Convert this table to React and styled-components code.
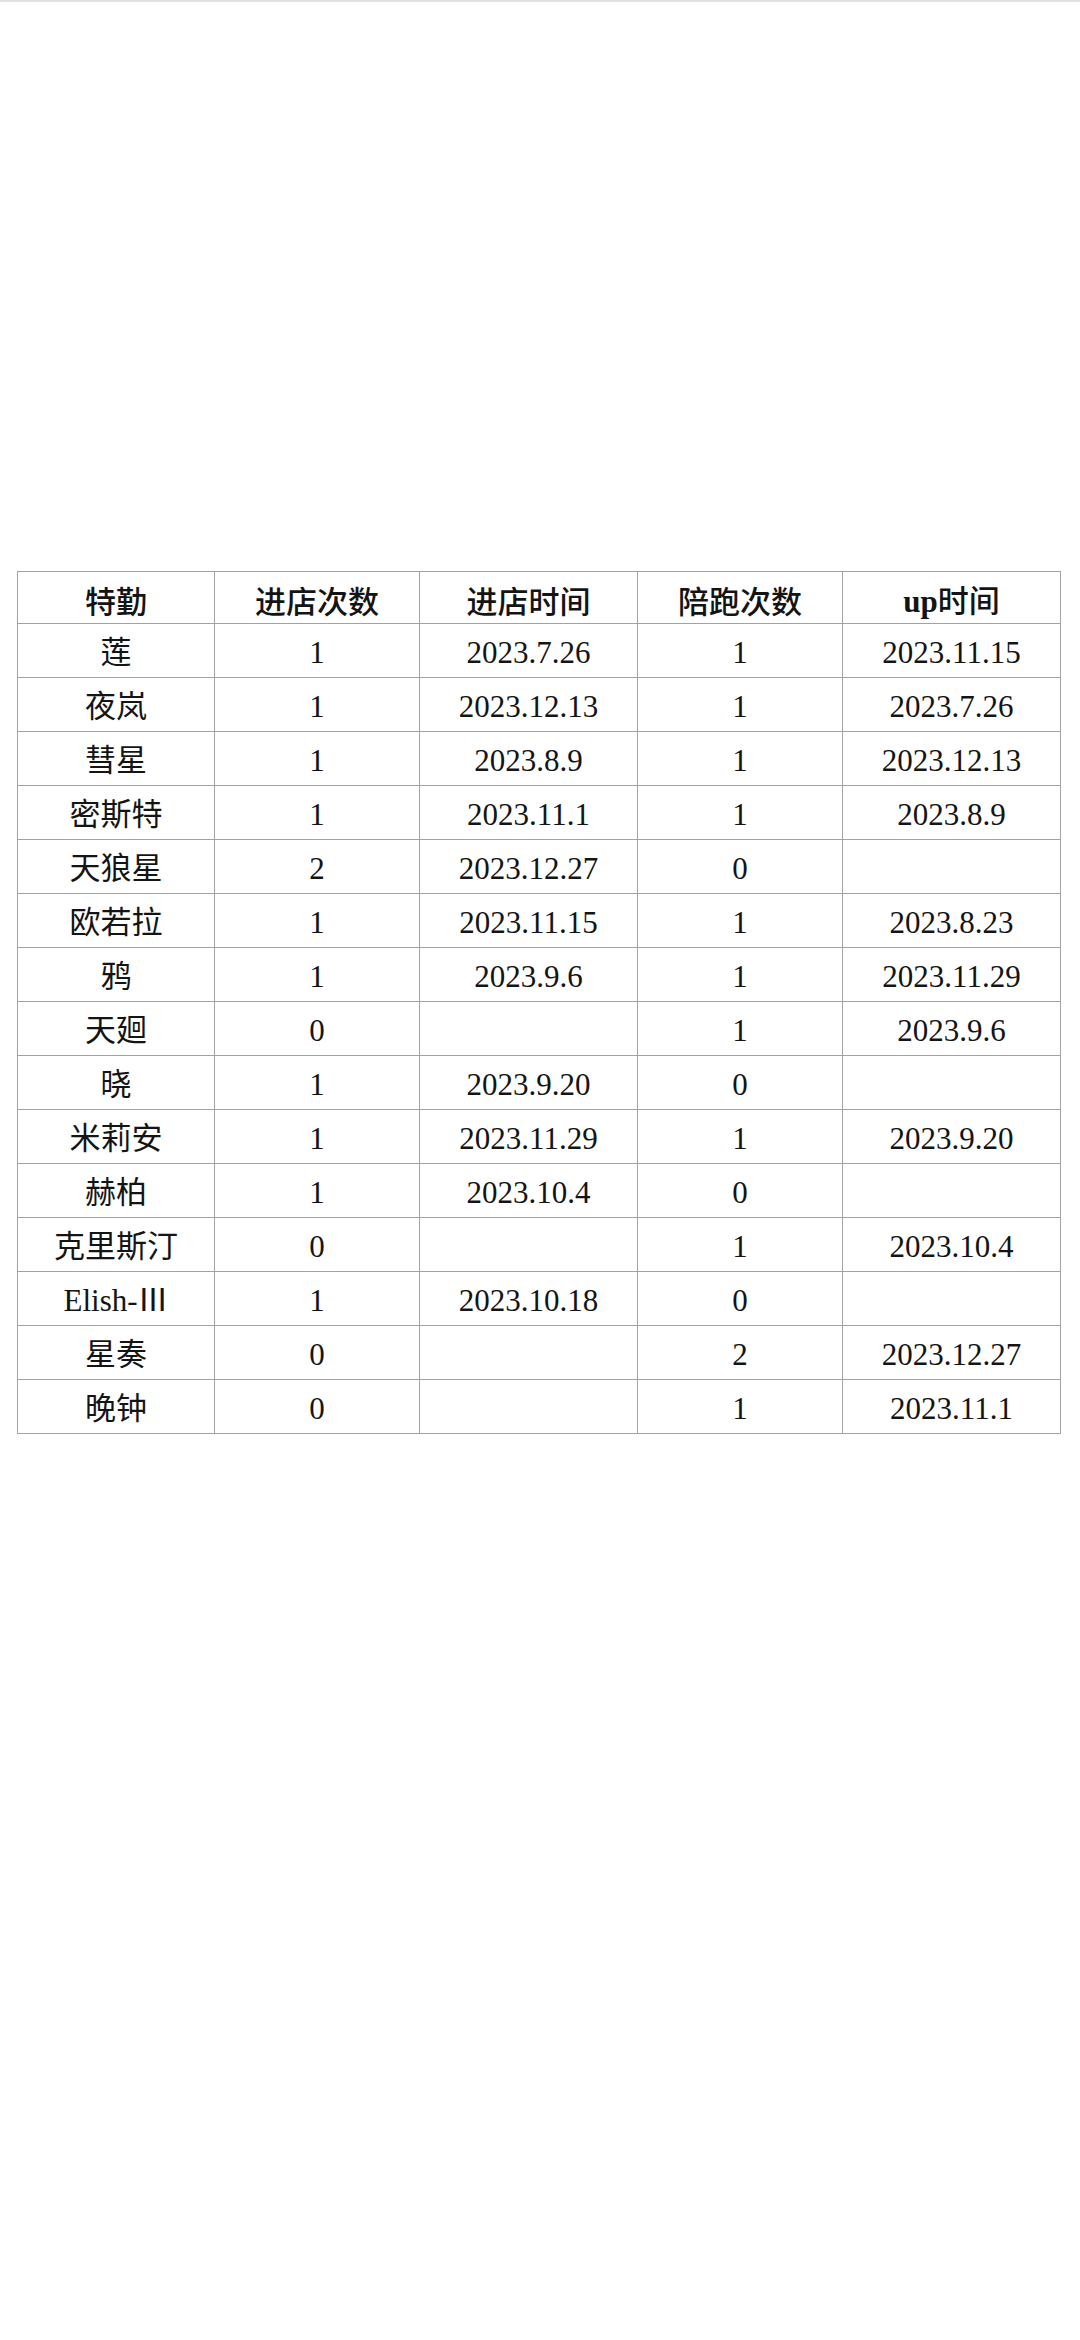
import React from 'react';
import styled, { createGlobalStyle } from 'styled-components';

const GlobalStyle = createGlobalStyle`
  html, body {
    margin: 0;
    padding: 0;
    background: #ffffff;
  }
  body {
    font-family: "Liberation Serif", "Noto Sans CJK SC", serif;
    color: #141414;
  }
`;

const headers = ['特勤', '进店次数', '进店时间', '陪跑次数', 'up时间'];

const rows = [
  ['莲', '1', '2023.7.26', '1', '2023.11.15'],
  ['夜岚', '1', '2023.12.13', '1', '2023.7.26'],
  ['彗星', '1', '2023.8.9', '1', '2023.12.13'],
  ['密斯特', '1', '2023.11.1', '1', '2023.8.9'],
  ['天狼星', '2', '2023.12.27', '0', ''],
  ['欧若拉', '1', '2023.11.15', '1', '2023.8.23'],
  ['鸦', '1', '2023.9.6', '1', '2023.11.29'],
  ['天廻', '0', '', '1', '2023.9.6'],
  ['晓', '1', '2023.9.20', '0', ''],
  ['米莉安', '1', '2023.11.29', '1', '2023.9.20'],
  ['赫柏', '1', '2023.10.4', '0', ''],
  ['克里斯汀', '0', '', '1', '2023.10.4'],
  ['Elish-Ⅲ', '1', '2023.10.18', '0', ''],
  ['星奏', '0', '', '2', '2023.12.27'],
  ['晚钟', '0', '', '1', '2023.11.1'],
];

const colWidths = [197, 205, 218, 205, 218];

const Page = styled.div`
  min-height: 2340px;
  border-top: 2px solid #e1e1e1;
  box-sizing: border-box;
  padding: 569px 21px 0 17px;
`;

const Table = styled.table`
  border-collapse: collapse;
  table-layout: fixed;
  width: 1042px;
  font-size: 31px;
`;

const HeadCell = styled.th`
  height: 52px;
  padding: 4px 0 0;
  box-sizing: border-box;
  border: 1px solid #a3a3a3;
  text-align: center;
  vertical-align: middle;
  font-family: "Noto Sans CJK SC", sans-serif;
  font-weight: 500;
  line-height: 1;
`;

const Bold = styled.span`
  font-family: "Liberation Serif", serif;
  font-weight: 700;
`;

const Cell = styled.td`
  height: 54px;
  padding: 4px 0 0;
  box-sizing: border-box;
  border: 1px solid #a3a3a3;
  text-align: center;
  vertical-align: middle;
  line-height: 1;
  white-space: nowrap;
`;

export default function App() {
  return (
    <>
      <GlobalStyle />
      <Page>
        <Table>
          <colgroup>
            {colWidths.map((w, i) => (
              <col key={i} style={{ width: w }} />
            ))}
          </colgroup>
          <thead>
            <tr>
              {headers.map((h) => (
                <HeadCell key={h}>
                  {h === 'up时间' ? (
                    <>
                      <Bold>up</Bold>时间
                    </>
                  ) : (
                    h
                  )}
                </HeadCell>
              ))}
            </tr>
          </thead>
          <tbody>
            {rows.map((r, i) => (
              <tr key={i}>
                {r.map((c, j) => (
                  <Cell key={j}>{c}</Cell>
                ))}
              </tr>
            ))}
          </tbody>
        </Table>
      </Page>
    </>
  );
}
